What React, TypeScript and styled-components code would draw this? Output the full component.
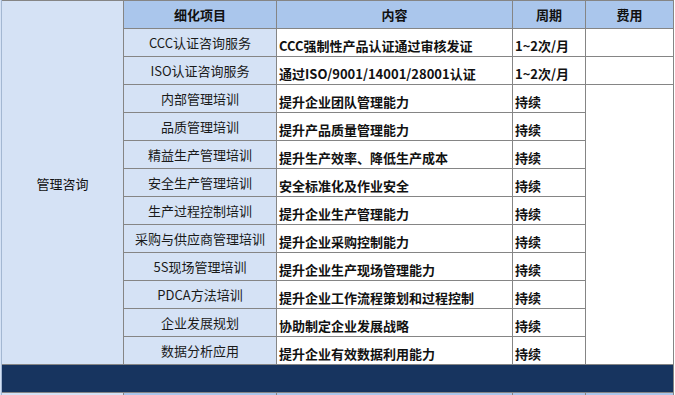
import React from "react";
import styled, { createGlobalStyle } from "styled-components";

const Global = createGlobalStyle`
  html, body {
    margin: 0;
    padding: 0;
    background: #ffffff;
    overflow: hidden;
  }
  body {
    font-family: "Noto Sans CJK SC", "Noto Sans", sans-serif;
  }
`;

const Page = styled.div`
  width: 675px;
  height: 395px;
  overflow: hidden;
  display: flex;
  background: #ffffff;
`;

const EdgeStrip = styled.div`
  width: 1px;
  flex: none;
  background: #d5e2f5;
`;

const Sheet = styled.div`
  display: grid;
  grid-template-columns: 121px 152px 235px 72px 87px;
  grid-template-rows: repeat(15, 27px);
  gap: 1px;
  padding-top: 1px;
  padding-right: 1px;
  background: #858585;
  border-left: 1px solid #a3b7d2;
  align-self: flex-start;
`;

type Tone = "head" | "light" | "white" | "dark";

const tones: Record<Tone, string> = {
  head: "#aac6ec",
  light: "#d5e2f5",
  white: "#ffffff",
  dark: "#17345f",
};

const Cell = styled.div<{ $tone: Tone; $align?: "center" | "left"; $bold?: boolean; $valign?: "center" | "bottom" }>`
  background: ${(p) => tones[p.$tone]};
  display: flex;
  justify-content: ${(p) => (p.$align === "left" ? "flex-start" : "center")};
  align-items: ${(p) => (p.$valign === "bottom" ? "flex-end" : "center")};
  padding: ${(p) => (p.$align === "left" ? "0 0 2px 2px" : "0")};
  font-size: 13px;
  line-height: 17px;
  font-weight: ${(p) => (p.$bold ? 700 : 400)};
  color: #111111;
  white-space: nowrap;
  overflow: hidden;
`;

const CategoryCell = styled(Cell)`
  grid-column: 1;
  grid-row: 1 / span 13;
  padding-top: 2px;
`;

const FeeMerged = styled(Cell)`
  grid-column: 5;
  grid-row: 4 / span 10;
`;

const Band = styled.div`
  grid-column: 1 / -1;
  grid-row: 14;
  background: #17345f;
`;

const ItemText = styled.span`
  color: #1a1a1a;
`;

type Row = { item: string; content: string; period: string };

const rows: Row[] = [
  { item: "CCC认证咨询服务", content: "CCC强制性产品认证通过审核发证", period: "1~2次/月" },
  { item: "ISO认证咨询服务", content: "通过ISO/9001/14001/28001认证", period: "1~2次/月" },
  { item: "内部管理培训", content: "提升企业团队管理能力", period: "持续" },
  { item: "品质管理培训", content: "提升产品质量管理能力", period: "持续" },
  { item: "精益生产管理培训", content: "提升生产效率、降低生产成本", period: "持续" },
  { item: "安全生产管理培训", content: "安全标准化及作业安全", period: "持续" },
  { item: "生产过程控制培训", content: "提升企业生产管理能力", period: "持续" },
  { item: "采购与供应商管理培训", content: "提升企业采购控制能力", period: "持续" },
  { item: "5S现场管理培训", content: "提升企业生产现场管理能力", period: "持续" },
  { item: "PDCA方法培训", content: "提升企业工作流程策划和过程控制", period: "持续" },
  { item: "企业发展规划", content: "协助制定企业发展战略", period: "持续" },
  { item: "数据分析应用", content: "提升企业有效数据利用能力", period: "持续" },
];

export default function App() {
  return (
    <>
      <Global />
      <Page>
        <EdgeStrip />
        <Sheet>
          <CategoryCell $tone="light">管理咨询</CategoryCell>
          <Cell $tone="head" $bold>细化项目</Cell>
          <Cell $tone="head" $bold>内容</Cell>
          <Cell $tone="head" $bold>周期</Cell>
          <Cell $tone="head" $bold>费用</Cell>
          {rows.map((r, i) => (
            <React.Fragment key={r.item}>
              <Cell $tone="light" style={{ gridRow: i + 2, gridColumn: 2 }}>
                <ItemText>{r.item}</ItemText>
              </Cell>
              <Cell $tone="white" $align="left" $valign="bottom" $bold style={{ gridRow: i + 2, gridColumn: 3 }}>
                {r.content}
              </Cell>
              <Cell $tone="white" $align="left" $valign="bottom" $bold style={{ gridRow: i + 2, gridColumn: 4 }}>
                {r.period}
              </Cell>
              {i < 2 && <Cell $tone="white" style={{ gridRow: i + 2, gridColumn: 5 }} />}
            </React.Fragment>
          ))}
          <FeeMerged $tone="white" />
          <Band />
          <Cell $tone="light" />
          <Cell $tone="head" />
          <Cell $tone="head" />
          <Cell $tone="head" />
          <Cell $tone="head" />
        </Sheet>
      </Page>
    </>
  );
}
